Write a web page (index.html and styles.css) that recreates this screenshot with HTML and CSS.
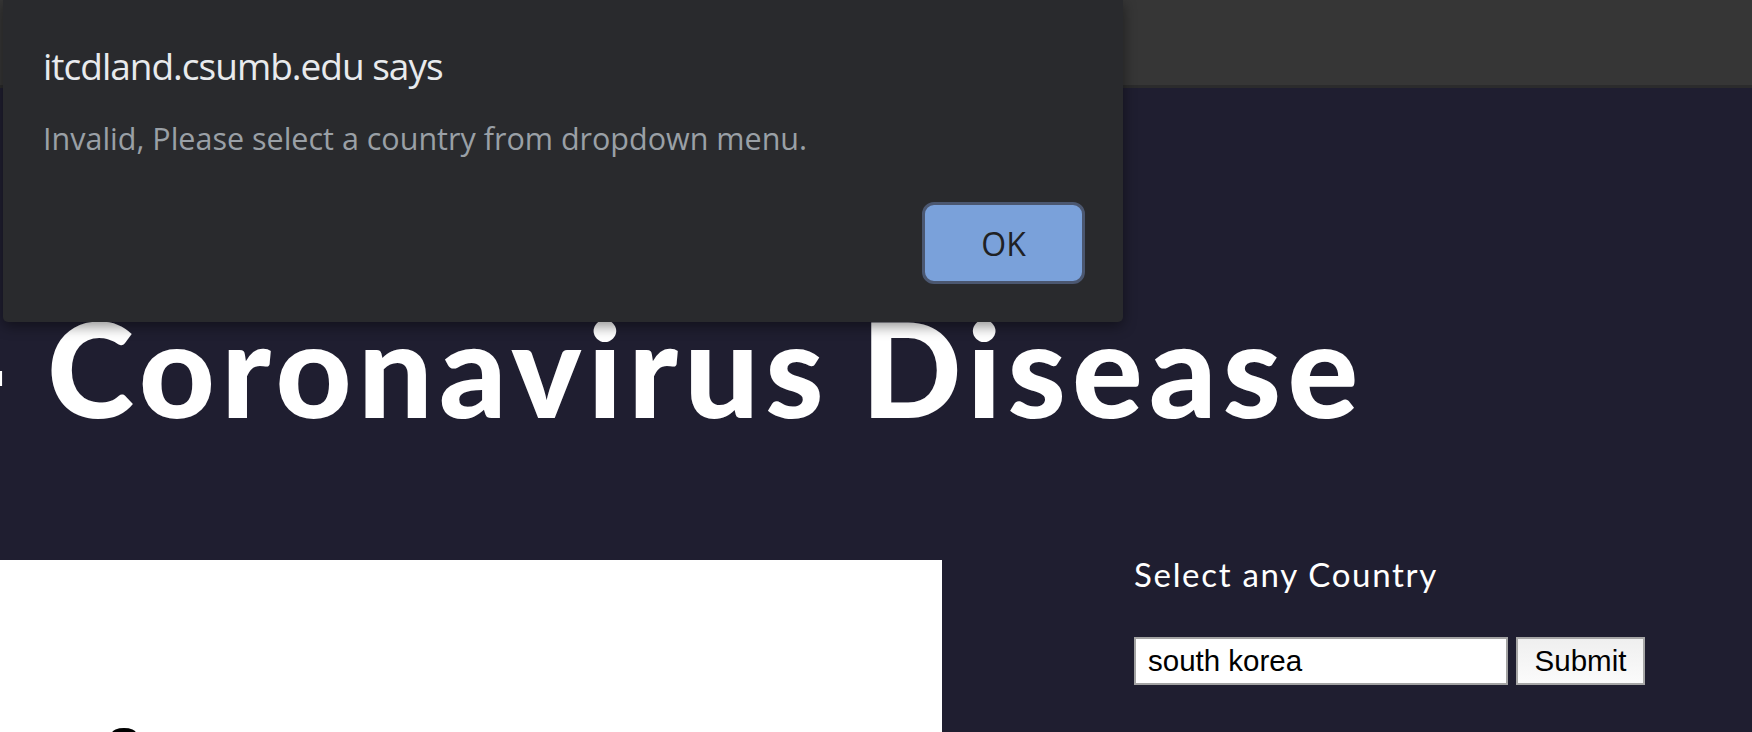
FILE: index.html
```html
<!DOCTYPE html>
<html lang="en">
<head>
<meta charset="utf-8">
<title>Coronavirus Disease</title>
<link rel="stylesheet" href="styles.css">
</head>
<body>
  <div class="topbar"></div>
  <main class="page">
    <h1 class="title">- Coronavirus Disease</h1>
    <section class="content">
      <div class="media">
        <svg class="blob" width="40" height="12" viewBox="0 0 40 12"><ellipse cx="20" cy="13" rx="12" ry="5" fill="#000"/></svg>
      </div>
      <form class="picker" onsubmit="return false">
        <label class="picker-label" for="country">Select any Country</label>
        <div class="picker-row">
          <input id="country" class="picker-input" type="text" value="south korea">
          <button class="picker-btn" type="submit">Submit</button>
        </div>
      </form>
    </section>
  </main>
  <div class="dialog" role="alertdialog">
    <div class="dialog-title">itcdland.csumb.edu says</div>
    <div class="dialog-msg">Invalid, Please select a country from dropdown menu.</div>
    <div class="dialog-actions">
      <button class="dialog-ok">OK</button>
    </div>
  </div>
</body>
</html>
```

FILE: styles.css
```css
html, body {
  margin: 0;
  padding: 0;
}
body {
  width: 1752px;
  height: 732px;
  overflow: hidden;
  background: #1f1e30;
  font-family: "Lato", "Liberation Sans", sans-serif;
  position: relative;
}
.topbar {
  height: 85px;
  background: #363636;
  border-bottom: 3px solid #2b2b2c;
}
.page {
  background: #1f1e30;
}
.title {
  margin: 213px 0 127px -40px;
  font-family: "Lato", sans-serif;
  font-weight: 900;
  font-size: 132px;
  line-height: 132px;
  letter-spacing: 6.2px;
  word-spacing: -6px;
  color: #ffffff;
  white-space: nowrap;
}
.content {
  display: flex;
  align-items: flex-start;
}
.media {
  width: 942px;
  height: 172px;
  background: #ffffff;
  display: flex;
  align-items: flex-end;
  padding-left: 104px;
  box-sizing: border-box;
}
.blob {
  display: block;
}
.picker {
  margin-left: 192px;
  display: flex;
  flex-direction: column;
}
.picker-label {
  font-family: "Lato", sans-serif;
  font-size: 33px;
  line-height: 28px;
  letter-spacing: 1.7px;
  color: #ffffff;
}
.picker-row {
  display: flex;
  gap: 8px;
  margin-top: 49px;
}
.picker-input {
  width: 374px;
  height: 48px;
  box-sizing: border-box;
  border: 2px solid #a3a3a3;
  padding: 0 12px;
  font-family: "Liberation Sans", Arial, sans-serif;
  font-size: 29.5px;
  color: #000;
  background: #fff;
  outline: none;
}
.picker-btn {
  width: 129px;
  height: 48px;
  box-sizing: border-box;
  border: 2px solid #a6a6a6;
  background: linear-gradient(#efefef, #fbfbfb);
  font-family: "Liberation Sans", Arial, sans-serif;
  font-size: 29.5px;
  color: #000;
  padding: 0;
}
.dialog {
  position: absolute;
  top: 0;
  left: 3px;
  width: 1120px;
  height: 322px;
  box-sizing: border-box;
  background: #292a2d;
  border-radius: 0 0 5px 5px;
  box-shadow: 0 4px 14px rgba(0, 0, 0, 0.45);
  padding: 44px 38px 38px 40px;
  display: flex;
  flex-direction: column;
  font-family: "Open Sans", "Noto Sans", sans-serif;
}
.dialog-title {
  font-size: 37px;
  line-height: 44px;
  letter-spacing: -1px;
  color: #e8eaed;
}
.dialog-msg {
  margin-top: 32px;
  font-size: 30.5px;
  line-height: 36px;
  color: #9aa0a6;
}
.dialog-actions {
  margin-top: auto;
  display: flex;
  justify-content: flex-end;
}
.dialog-ok {
  width: 163px;
  height: 82px;
  box-sizing: border-box;
  border: 3px solid #4b5770;
  border-radius: 12px;
  background: #7aa1da;
  color: #1f2124;
  font-family: "Open Sans", "Noto Sans", sans-serif;
  font-size: 32px;
  padding: 0;
}
```
